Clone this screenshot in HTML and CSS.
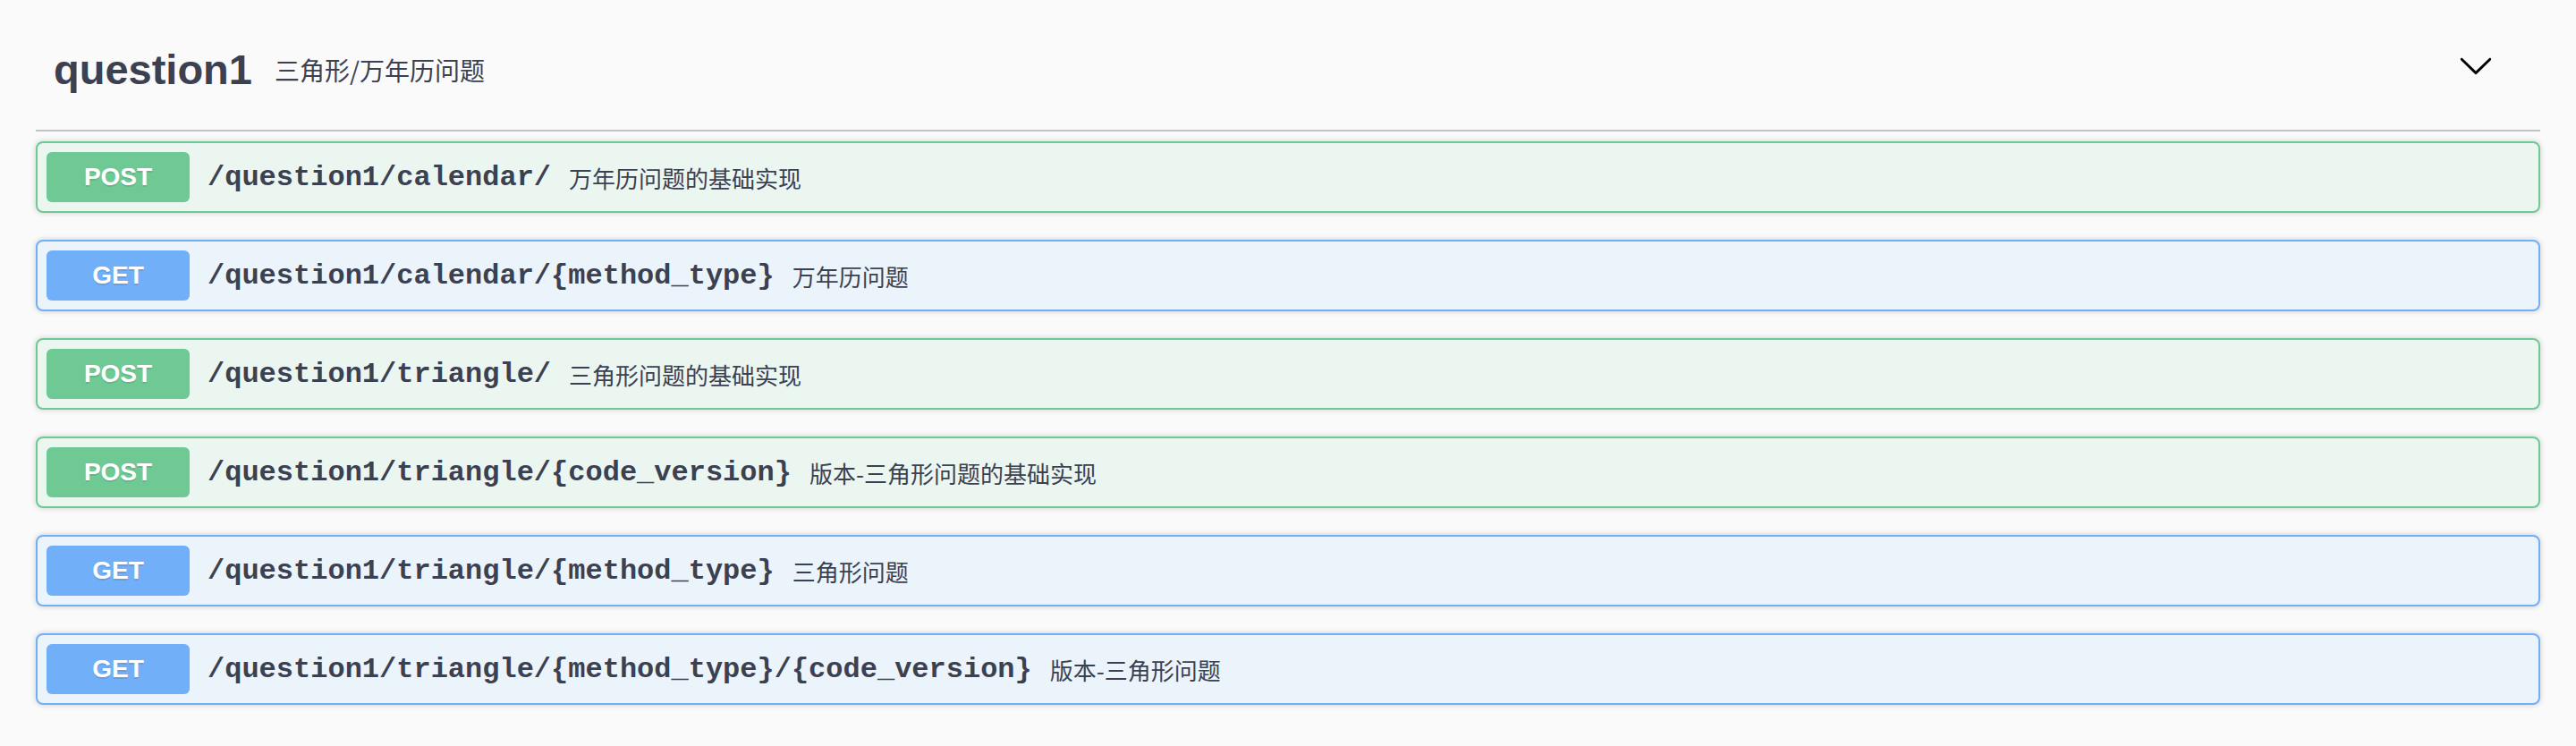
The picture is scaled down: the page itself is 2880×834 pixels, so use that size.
FILE: index.html
```html
<!DOCTYPE html>
<html lang="zh-CN">
<head>
<meta charset="utf-8">
<title>question1</title>
<link rel="stylesheet" href="styles.css">
</head>
<body>
<div class="wrapper">
  <section class="tag-section">
    <h4 class="opblock-tag">
      <span class="tag-name">question1</span>
      <small class="tag-desc">三角形/万年历问题</small>
      <button class="expand-operation" type="button" aria-label="collapse">
        <svg class="arrow" width="40" height="40" viewBox="0 0 20 20" aria-hidden="true">
          <path d="M17.418 6.109c.272-.268.709-.268.979 0s.271.701 0 .969l-7.908 7.83c-.27.268-.707.268-.979 0l-7.908-7.830c-.27-.268-.27-.701 0-.969.271-.268.709-.268.979 0L10 13.25l7.418-7.141z"/>
        </svg>
      </button>
    </h4>
    <div class="ops">
      <div class="opblock opblock-post">
        <div class="opblock-summary">
          <span class="method">POST</span>
          <span class="path">/question1/calendar/</span>
          <span class="desc">万年历问题的基础实现</span>
        </div>
      </div>
      <div class="opblock opblock-get">
        <div class="opblock-summary">
          <span class="method">GET</span>
          <span class="path">/question1/calendar/{method_type}</span>
          <span class="desc">万年历问题</span>
        </div>
      </div>
      <div class="opblock opblock-post">
        <div class="opblock-summary">
          <span class="method">POST</span>
          <span class="path">/question1/triangle/</span>
          <span class="desc">三角形问题的基础实现</span>
        </div>
      </div>
      <div class="opblock opblock-post">
        <div class="opblock-summary">
          <span class="method">POST</span>
          <span class="path">/question1/triangle/{code_version}</span>
          <span class="desc">版本-三角形问题的基础实现</span>
        </div>
      </div>
      <div class="opblock opblock-get">
        <div class="opblock-summary">
          <span class="method">GET</span>
          <span class="path">/question1/triangle/{method_type}</span>
          <span class="desc">三角形问题</span>
        </div>
      </div>
      <div class="opblock opblock-get">
        <div class="opblock-summary">
          <span class="method">GET</span>
          <span class="path">/question1/triangle/{method_type}/{code_version}</span>
          <span class="desc">版本-三角形问题</span>
        </div>
      </div>
    </div>
  </section>
</div>
</body>
</html>
```

FILE: styles.css
```css
* { box-sizing: border-box; }

html, body {
  margin: 0;
  padding: 0;
  background: #fafafa;
}

body {
  font-family: "Liberation Sans", Arial, "Noto Sans CJK SC", sans-serif;
  color: #3b4151;
}

.wrapper {
  padding: 0 40px;
}

.opblock-tag {
  display: flex;
  align-items: center;
  height: 147px;
  margin: 0 0 11px;
  padding: 10px 40px 0 20px;
  border-bottom: 2px solid rgba(59, 65, 81, 0.3);
  font-family: "Liberation Sans", Arial, sans-serif;
  font-size: 47px;
  font-weight: 700;
  color: #3b4151;
}

.tag-name {
  line-height: 55px;
}

.tag-desc {
  flex: 1;
  padding: 0 20px 0 25px;
  font-family: "Noto Sans CJK SC", "Liberation Sans", sans-serif;
  font-size: 28px;
  font-weight: 400;
  color: #3b4151;
}

.expand-operation {
  display: flex;
  align-items: center;
  padding: 2px 12px;
  margin: -10px 0 0;
  border: none;
  background: none;
}

.arrow {
  display: block;
  fill: #000;
}

.opblock {
  margin: 0 0 30px;
  border: 2px solid #000;
  border-radius: 8px;
  box-shadow: 0 0 6px rgba(0, 0, 0, 0.19);
}

.opblock-post {
  border-color: #6fc995;
  background: #ecf6f0;
}

.opblock-get {
  border-color: #72aff9;
  background: #ebf3fb;
}

.opblock-summary {
  display: flex;
  align-items: center;
  padding: 10px;
}

.method {
  min-width: 160px;
  padding: 12px 30px;
  border-radius: 6px;
  font-family: "Liberation Sans", Arial, sans-serif;
  font-size: 28px;
  line-height: 32px;
  font-weight: 700;
  text-align: center;
  color: #fff;
  text-shadow: 0 2px 0 rgba(0, 0, 0, 0.1);
}

.opblock-post .method { background: #6fc995; }
.opblock-get .method { background: #72aff9; }

.path {
  padding: 0 20px;
  font-family: "Liberation Mono", "Courier New", monospace;
  font-size: 32px;
  font-weight: 700;
  color: #3b4151;
}

.desc {
  flex: 1 1 auto;
  font-family: "Noto Sans CJK SC", "Liberation Sans", sans-serif;
  font-size: 26px;
  color: #3b4151;
}
```
